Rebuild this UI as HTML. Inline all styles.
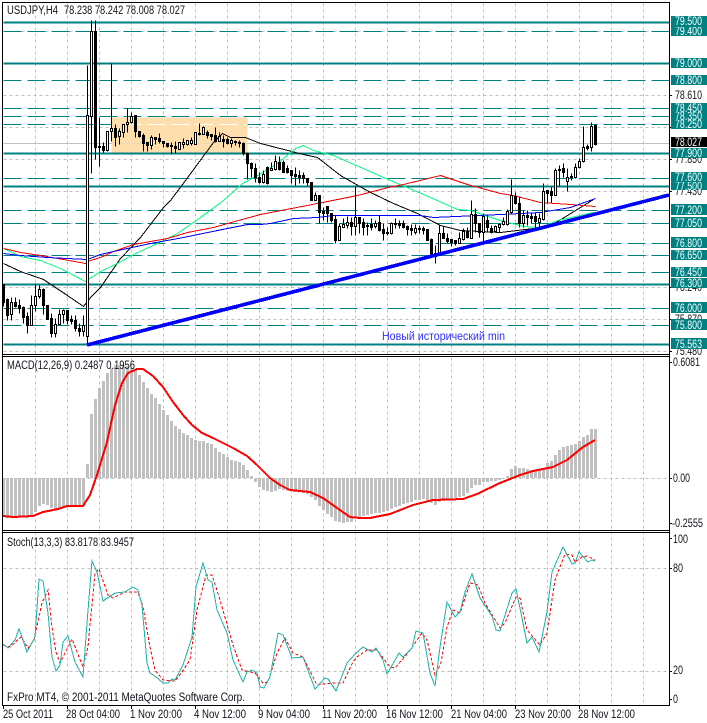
<!DOCTYPE html>
<html>
<head>
<meta charset="utf-8">
<title>USDJPY,H4</title>
<style>
html,body{margin:0;padding:0;background:#fff;width:707px;height:723px;overflow:hidden}
svg{display:block}
text{font-family:"Liberation Sans",sans-serif;font-size:11.5px;fill:#10141c}
.l text{fill:#f4ffff}
.l rect{fill:#008080}
</style>
</head>
<body>
<svg width="707" height="723" viewBox="0 0 707 723" xmlns="http://www.w3.org/2000/svg">
<rect width="707" height="723" fill="#fff"/>
<g transform="translate(.5,.5)" shape-rendering="crispEdges">
<!-- vertical grid -->
<path fill="none" stroke="#c0c0c0" stroke-dasharray="3 3" d="M35 3V705M67 3V705M99 3V705M131 3V705M163 3V705M195 3V705M227 3V705M259 3V705M291 3V705M323 3V705M355 3V705M387 3V705M419 3V705M451 3V705M483 3V705M515 3V705M547 3V705M579 3V705M611 3V705M643 3V705"/>
<!-- horizontal grid main -->
<path fill="none" stroke="#c0c0c0" stroke-dasharray="3 3" d="M3 31H669M3 95H669M3 127H669M3 159H669M3 191H669M3 223H669M3 255H669M3 287H669M3 319H669M3 351H669M3 478H669M3 568H669M3 671H669"/>
<!-- current price -->
<path fill="none" stroke="#c0c0c0" d="M3 143H669"/>
<!-- dashed teal levels -->
<path fill="none" stroke="#008080" stroke-dasharray="18 6" d="M3 31H669M3 80H669M3 108H669M3 116H669M3 124H669M3 178H669M3 210H669M3 223H669M3 243H669M3 255H669M3 272H669M3 308H669M3 325H669"/>
<!-- orange box -->
<rect x="111" y="117" width="136" height="35" fill="#ffdead" stroke="none"/>
<path fill="none" stroke="#fff" stroke-dasharray="18 6" d="M123 124H247"/>
<path fill="none" stroke="#f0d8b0" d="M111 143H247"/>
<!-- solid teal levels -->
<path fill="none" stroke="#008080" stroke-width="2" d="M3 22H669M3 63H669M3 153H669M3 186H669M3 284H669M3 344H669"/>
</g>
<!-- moving averages -->
<g transform="translate(.5,.5)" fill="none" shape-rendering="crispEdges">
<polyline stroke="#000" stroke-width="1" points="3,263 20,271 43,279 67,295 83,306 90,297 100,287 120,258 140,237 163,207 170,200 185,180 213,142 222,133 230,137 245,137 260,143 303,154 317,157 340,175 370,192 393,203 417,213 440,225 460,230 500,232 533,228 554,223 593,199"/>
<polyline stroke="#00ff7f" stroke-width="1" points="3,248 20,256 40,260 60,268 85,281 100,271 117,263 133,254 157,243 177,233 200,217 223,200 242,183 257,175 277,163 295,148 303,145 313,150 333,155 390,180 430,197 457,209 470,210 500,220 523,226 540,227 557,220 593,212"/>
<polyline stroke="#ff0000" stroke-width="1" points="3,248 20,252 40,255 63,259 85,263 87,261 100,257 113,251 133,244 167,238 187,232 213,227 227,223 260,214 317,203 357,195 388,187 403,184 440,175 467,184 500,193 513,195 540,202 570,204 595,206"/>
<polyline stroke="#0000ff" stroke-width="1" points="3,253 20,255 47,257 87,259 100,254 113,251 150,243 183,237 217,230 247,224 260,224 270,223 293,218 317,217 333,215 420,215 433,217 500,214 540,212 570,207 595,198"/>
</g>
<!-- candles -->
<g transform="translate(.5,.5)" shape-rendering="crispEdges" stroke="#000">
<path fill="none" d="M3 284V306M7 298V320M11 297V320M15 297V307M19 299V313M23 306V323M27 312V333M31 295V325M35 283V311M39 285V298M43 288V314M47 305V319M51 313V337M55 318V337M59 309V324M63 309V323M67 310V324M71 315V324M75 315V331M79 323V336M83 315V336M87 65V345M91 20V173M95 20V159M99 117V166M103 142V152M107 131V151M111 63V141M115 124V146M119 128V144M123 124V137M127 108V132M131 112V123M135 115V137M139 131V137M143 133V151M147 142V151M151 135V149M155 137V144M159 133V143M163 141V147M167 143V147M171 142V154M175 141V153M179 142V149M183 138V148M187 140V145M191 137V145M195 132V144M199 123V135M203 126V134M207 130V138M211 134V140M215 127V142M219 132V141M223 135V147M227 137V144M231 138V147M235 140V145M239 140V147M243 142V155M247 152V179M251 162V177M255 163V182M259 172V183M263 170V183M267 166V184M271 162V170M275 155V170M279 156V170M283 160V172M287 165V173M291 170V183M295 167V185M299 170V183M303 172V183M307 178V185M311 182V200M315 192V200M319 195V223M323 207V220M327 206V222M331 213V222M335 215V243M339 223V240M343 218V227M347 216V228M351 217V235M355 186V235M359 217V233M363 218V235M367 222V235M371 218V230M375 220V228M379 215V231M383 223V240M387 227V235M391 222V234M395 218V228M399 220V228M403 220V228M407 225V235M411 224V235M415 224V234M419 225V233M423 226V234M427 229V240M431 238V257M435 245V263M439 225V255M443 226V238M447 233V243M451 239V246M455 240V245M459 232V243M463 228V240M467 227V238M471 200V238M475 208V232M479 223V237M483 213V241M487 215V232M491 225V233M495 225V232M499 223V232M503 217V225M507 209V225M511 179V213M515 192V204M519 197V227M523 210V227M527 210V225M531 212V223M535 212V227M539 213V227M543 183V220M547 190V203M551 187V202M555 168V195M559 165V186M563 163V177M567 168V191M571 173V180M575 163V178M579 158V168M583 126V162M587 144V150M591 122V151M595 124V145"/>
<path fill="#000" d="M3 284h1v18h-1zM6 299h2v16h-2zM14 302h2v4h-2zM18 305h2v3h-2zM22 307h2v10h-2zM26 316h2v9h-2zM42 289h2v16h-2zM46 305h2v14h-2zM50 318h2v15h-2zM66 310h2v10h-2zM70 319h2v2h-2zM74 320h2v8h-2zM78 328h2v3h-2zM94 31h2v116h-2zM98 146h2v1h-2zM102 146h2v4h-2zM114 128h2v9h-2zM134 115h2v16h-2zM138 131h2v5h-2zM142 135h2v8h-2zM146 142h2v3h-2zM154 137h2v2h-2zM158 138h2v3h-2zM162 141h2v2h-2zM166 143h2v3h-2zM170 145h2v1h-2zM174 146h2v2h-2zM198 133h2v1h-2zM206 132h2v3h-2zM210 134h2v2h-2zM214 135h2v6h-2zM222 139h2v2h-2zM226 139h2v4h-2zM234 141h2v1h-2zM238 142h2v1h-2zM242 143h2v10h-2zM246 153h2v10h-2zM250 163h2v5h-2zM254 168h2v9h-2zM258 177h2v5h-2zM266 167h2v16h-2zM278 162h2v7h-2zM282 162h2v10h-2zM286 168h2v4h-2zM290 170h2v5h-2zM294 174h2v2h-2zM298 175h2v2h-2zM302 175h2v3h-2zM306 178h2v4h-2zM310 182h2v18h-2zM318 195h2v17h-2zM322 211h2v2h-2zM326 206h2v7h-2zM330 213h2v7h-2zM334 219h2v21h-2zM350 222h2v4h-2zM358 217h2v6h-2zM362 222h2v5h-2zM366 225h2v1h-2zM370 224h2v3h-2zM378 222h2v8h-2zM382 229h2v4h-2zM386 232h2v1h-2zM394 223h2v1h-2zM398 223h2v2h-2zM402 223h2v4h-2zM406 226h2v3h-2zM410 228h2v2h-2zM418 228h2v1h-2zM422 228h2v2h-2zM426 229h2v11h-2zM430 239h2v17h-2zM434 253h2v3h-2zM442 233h2v5h-2zM446 238h2v3h-2zM450 239h2v3h-2zM454 240h2v3h-2zM466 231h2v6h-2zM474 214h2v9h-2zM478 223h2v9h-2zM486 220h2v7h-2zM490 228h2v4h-2zM514 196h2v7h-2zM518 203h2v20h-2zM526 215h2v2h-2zM530 216h2v2h-2zM534 216h2v5h-2zM546 190h2v3h-2zM550 191h2v4h-2zM558 169h2v1h-2zM562 168h2v4h-2zM570 176h2v1h-2zM586 146h2v2h-2zM594 125h2v19h-2z"/>
<path fill="#fff" d="M10 302h2v12h-2zM30 305h2v20h-2zM34 296h2v9h-2zM38 289h2v7h-2zM54 324h2v9h-2zM58 314h2v10h-2zM62 310h2v4h-2zM82 325h2v6h-2zM86 115h2v221h-2zM90 31h2v85h-2zM106 131h2v19h-2zM110 128h2v3h-2zM118 131h2v5h-2zM122 124h2v8h-2zM126 122h2v2h-2zM130 116h2v6h-2zM150 137h2v8h-2zM178 142h2v7h-2zM182 142h2v2h-2zM186 140h2v4h-2zM190 140h2v3h-2zM194 132h2v12h-2zM202 127h2v7h-2zM218 136h2v5h-2zM230 140h2v3h-2zM262 174h2v8h-2zM270 168h2v2h-2zM274 161h2v8h-2zM314 195h2v5h-2zM338 226h2v14h-2zM342 224h2v3h-2zM346 222h2v3h-2zM354 217h2v9h-2zM374 223h2v3h-2zM390 223h2v10h-2zM414 228h2v4h-2zM438 233h2v22h-2zM458 238h2v5h-2zM462 231h2v8h-2zM470 214h2v24h-2zM482 216h2v16h-2zM494 226h2v5h-2zM498 224h2v3h-2zM502 221h2v3h-2zM506 211h2v13h-2zM510 195h2v17h-2zM522 215h2v8h-2zM538 218h2v4h-2zM542 191h2v28h-2zM554 170h2v25h-2zM566 177h2v4h-2zM574 167h2v10h-2zM578 161h2v6h-2zM582 147h2v14h-2zM590 126h2v21h-2z"/>
</g>
<!-- trend line -->
<line x1="87" y1="345" x2="669" y2="195" stroke="#0000ff" stroke-width="3.6" shape-rendering="crispEdges"/>
<text x="382" y="340" textLength="123" lengthAdjust="spacingAndGlyphs" style="fill:#3030ff;font-size:12px">Новый исторический min</text>
<!-- MACD histogram -->
<path fill="none" stroke="#c0c0c0" stroke-width="3" shape-rendering="crispEdges" transform="translate(.5,0)" d="M3 478V517M7 478V518M11 478V517M15 478V517M19 478V517M23 478V517M27 478V518M31 478V517M35 478V512M39 478V506M43 478V504M47 478V505M51 478V508M55 478V509M59 478V509M63 478V507M67 478V506M71 478V506M75 478V506M79 478V506M83 478V506M87 478V464M91 478V414M95 478V399M99 478V388M103 478V381M107 478V373M111 478V368M115 478V365M119 478V365M123 478V365M127 478V366M131 478V368M135 478V370M139 478V375M143 478V382M147 478V388M151 478V394M155 478V398M159 478V404M163 478V410M167 478V415M171 478V421M175 478V426M179 478V429M183 478V433M187 478V435M191 478V438M195 478V440M199 478V441M203 478V441M207 478V443M211 478V444M215 478V448M219 478V452M223 478V454M227 478V457M231 478V460M235 478V461M239 478V462M243 478V465M247 478V470M251 478V476M255 478V482M259 478V487M263 478V490M267 478V491M271 478V492M275 478V491M279 478V489M283 478V490M287 478V491M291 478V491M295 478V492M299 478V492M303 478V493M307 478V494M311 478V497M315 478V500M319 478V506M323 478V510M327 478V514M331 478V517M335 478V521M339 478V522M343 478V523M347 478V522M351 478V522M355 478V518M359 478V517M363 478V516M367 478V515M371 478V514M375 478V513M379 478V513M383 478V512M387 478V511M391 478V509M395 478V507M399 478V506M403 478V504M407 478V503M411 478V502M415 478V500M419 478V500M423 478V499M427 478V501M431 478V503M435 478V505M439 478V502M443 478V501M447 478V500M451 478V499M455 478V498M459 478V497M463 478V496M467 478V493M471 478V488M475 478V485M479 478V485M483 478V482M487 478V482M491 478V481M495 478V481M499 478V480M503 478V479M507 478V476M511 478V469M515 478V466M519 478V468M523 478V468M527 478V469M531 478V470M535 478V471M539 478V470M543 478V468M547 478V463M551 478V461M555 478V455M559 478V450M563 478V447M567 478V446M571 478V445M575 478V444M579 478V441M583 478V437M587 478V435M591 478V429M595 478V429"/>
<polyline fill="none" stroke="#ff0000" stroke-width="2" shape-rendering="crispEdges" points="3,516 13,517 33,516 43,512 58,509 67,506 83,506 90,495 97,475 107,442 115,405 122,383 128,373 137,369 143,369 153,376 163,387 173,402 183,415 192,425 202,433 213,438 233,448 247,456 257,465 270,478 280,485 290,490 300,491 310,492 323,498 337,508 350,517 360,518 370,518 390,514 413,505 433,500 463,499 477,494 500,483 520,475 533,471 553,467 567,460 583,447 595,440"/>
<!-- Stochastic -->
<polyline fill="none" stroke="#ff0000" stroke-width="1" stroke-dasharray="3 2" shape-rendering="crispEdges" points="3,645 10,647 21,637 28,648 34,640 42,603 48,590 52,627 56,652 60,663 72,639 83,667 88,647 95,573 99,569 108,595 113,598 125,592 138,592 143,607 150,647 155,670 163,680 175,681 182,672 190,660 197,610 206,575 212,575 220,600 233,645 242,670 255,673 263,683 268,682 277,653 285,638 293,653 303,657 317,685 332,683 343,683 353,662 357,657 367,650 377,650 390,667 395,668 408,653 422,633 427,640 435,675 441,663 447,627 453,610 460,613 470,583 478,585 485,603 500,628 505,623 516,597 520,598 527,630 540,645 547,633 555,580 565,554 572,555 575,562 582,557 587,556 595,560"/>
<polyline fill="none" stroke="#20b2aa" stroke-width="1" shape-rendering="crispEdges" points="3,644 8,648 15,640 19,629 23,640 27,652 35,637 39,579 43,581 48,613 52,657 56,671 60,665 63,642 68,636 75,662 83,677 87,623 92,561 97,572 103,601 115,593 125,592 133,587 138,590 142,605 147,663 150,673 155,676 163,683 168,683 172,679 175,680 183,665 192,637 196,587 203,563 208,580 212,582 217,610 227,633 233,660 243,682 247,672 252,670 257,673 260,687 264,688 270,677 278,633 283,635 292,658 303,657 315,689 325,678 328,679 336,691 347,663 355,654 363,647 372,652 376,648 383,660 387,674 399,653 403,657 412,648 416,631 423,633 430,673 435,686 440,647 447,602 455,617 460,612 465,592 472,574 480,598 492,616 496,630 500,631 512,593 516,589 522,618 527,643 532,637 539,652 547,612 552,572 563,547 572,564 575,563 579,552 588,562 592,560 595,561"/>
<!-- frames -->
<g fill="#000" shape-rendering="crispEdges">
<rect x="2" y="2" width="668" height="1"/>
<rect x="2" y="2" width="1" height="704"/>
<rect x="669" y="2" width="1" height="704"/>
<rect x="2" y="354" width="668" height="1"/>
<rect x="2" y="356" width="668" height="1"/>
<rect x="2" y="530" width="668" height="1"/>
<rect x="2" y="532" width="668" height="1"/>
<rect x="2" y="705" width="668" height="1"/>
<rect x="669" y="95" width="3" height="1"/>
<rect x="669" y="127" width="3" height="1"/>
<rect x="669" y="159" width="3" height="1"/>
<rect x="669" y="191" width="3" height="1"/>
<rect x="669" y="287" width="3" height="1"/>
<rect x="669" y="319" width="3" height="1"/>
<rect x="669" y="351" width="3" height="1"/>
<rect x="669" y="362" width="3" height="1"/>
<rect x="669" y="478" width="3" height="1"/>
<rect x="669" y="523" width="3" height="1"/>
<rect x="669" y="568" width="3" height="1"/>
<rect x="669" y="671" width="3" height="1"/>
<rect x="669" y="699" width="3" height="1"/>
<rect x="669" y="538" width="3" height="1"/>
<rect x="3" y="706" width="1" height="3"/>
<rect x="67" y="706" width="1" height="3"/>
<rect x="131" y="706" width="1" height="3"/>
<rect x="195" y="706" width="1" height="3"/>
<rect x="259" y="706" width="1" height="3"/>
<rect x="323" y="706" width="1" height="3"/>
<rect x="387" y="706" width="1" height="3"/>
<rect x="451" y="706" width="1" height="3"/>
<rect x="515" y="706" width="1" height="3"/>
<rect x="579" y="706" width="1" height="3"/>
</g>
<!-- axis labels -->
<text x="7" y="14" textLength="51" lengthAdjust="spacingAndGlyphs">USDJPY,H4</text>
<text x="64" y="14" textLength="121" lengthAdjust="spacingAndGlyphs">78.238 78.242 78.008 78.027</text>
<text x="7" y="369" textLength="128" lengthAdjust="spacingAndGlyphs">MACD(12,26,9) 0.2487 0.1956</text>
<text x="7" y="546" textLength="127" lengthAdjust="spacingAndGlyphs">Stoch(13,3,3) 83.8178 83.9457</text>
<text x="7" y="701" textLength="238" lengthAdjust="spacingAndGlyphs">FxPro MT4, © 2001-2011 MetaQuotes Software Corp.</text>
<text x="3" y="718" textLength="50" lengthAdjust="spacingAndGlyphs">25 Oct 2011</text>
<text x="66" y="718" textLength="54" lengthAdjust="spacingAndGlyphs">28 Oct 04:00</text>
<text x="130" y="718" textLength="52" lengthAdjust="spacingAndGlyphs">1 Nov 20:00</text>
<text x="194" y="718" textLength="52" lengthAdjust="spacingAndGlyphs">4 Nov 12:00</text>
<text x="258" y="718" textLength="52" lengthAdjust="spacingAndGlyphs">9 Nov 04:00</text>
<text x="322" y="718" textLength="55" lengthAdjust="spacingAndGlyphs">11 Nov 20:00</text>
<text x="386" y="718" textLength="57" lengthAdjust="spacingAndGlyphs">16 Nov 12:00</text>
<text x="451" y="718" textLength="56" lengthAdjust="spacingAndGlyphs">21 Nov 04:00</text>
<text x="515" y="718" textLength="56" lengthAdjust="spacingAndGlyphs">23 Nov 20:00</text>
<text x="578" y="718" textLength="57" lengthAdjust="spacingAndGlyphs">28 Nov 12:00</text>
<text x="675" y="99" textLength="27" lengthAdjust="spacingAndGlyphs">78.610</text>
<text x="675" y="163" textLength="27" lengthAdjust="spacingAndGlyphs">77.850</text>
<text x="675" y="195" textLength="27" lengthAdjust="spacingAndGlyphs">77.430</text>
<text x="675" y="291" textLength="27" lengthAdjust="spacingAndGlyphs">76.240</text>
<text x="675" y="323" textLength="27" lengthAdjust="spacingAndGlyphs">75.870</text>
<text x="675" y="355" textLength="27" lengthAdjust="spacingAndGlyphs">75.480</text>
<text x="673" y="366" textLength="27" lengthAdjust="spacingAndGlyphs">0.6081</text>
<text x="673" y="482" textLength="17" lengthAdjust="spacingAndGlyphs">0.00</text>
<text x="672" y="527" textLength="31" lengthAdjust="spacingAndGlyphs">-0.2555</text>
<text x="673" y="543" textLength="15" lengthAdjust="spacingAndGlyphs">100</text>
<text x="673" y="572" textLength="10" lengthAdjust="spacingAndGlyphs">80</text>
<text x="673" y="674" textLength="10" lengthAdjust="spacingAndGlyphs">20</text>
<text x="673" y="703" textLength="5" lengthAdjust="spacingAndGlyphs">0</text>
<!-- teal price labels: lower-priority first so later boxes overlap -->
<g class="l">
<rect x="671" y="26" width="36" height="10"/><text x="675" y="35" textLength="27" lengthAdjust="spacingAndGlyphs">79.400</text>
<rect x="671" y="16" width="36" height="11"/><text x="675" y="25" textLength="27" lengthAdjust="spacingAndGlyphs">79.500</text>
<rect x="671" y="58" width="36" height="10"/><text x="675" y="67" textLength="27" lengthAdjust="spacingAndGlyphs">79.000</text>
<rect x="671" y="75" width="36" height="10"/><text x="675" y="84" textLength="27" lengthAdjust="spacingAndGlyphs">78.800</text>
<rect x="671" y="119" width="36" height="10"/><text x="675" y="128" textLength="27" lengthAdjust="spacingAndGlyphs">78.250</text>
<rect x="671" y="111" width="36" height="9"/><text x="675" y="120" textLength="27" lengthAdjust="spacingAndGlyphs">78.350</text>
<rect x="671" y="103" width="36" height="9"/><text x="675" y="112" textLength="27" lengthAdjust="spacingAndGlyphs">78.450</text>
<rect x="671" y="137" width="36" height="10" style="fill:#000"/><text x="675" y="146" textLength="27" lengthAdjust="spacingAndGlyphs" style="fill:#fff">78.027</text>
<rect x="671" y="148" width="36" height="10"/><text x="675" y="157" textLength="27" lengthAdjust="spacingAndGlyphs">77.900</text>
<rect x="671" y="182" width="36" height="8"/><text x="675" y="190" textLength="27" lengthAdjust="spacingAndGlyphs">77.500</text>
<rect x="671" y="172" width="36" height="10"/><text x="675" y="181" textLength="27" lengthAdjust="spacingAndGlyphs">77.600</text>
<rect x="671" y="204" width="36" height="11"/><text x="675" y="214" textLength="27" lengthAdjust="spacingAndGlyphs">77.200</text>
<rect x="671" y="217" width="36" height="11"/><text x="675" y="227" textLength="27" lengthAdjust="spacingAndGlyphs">77.050</text>
<rect x="671" y="237" width="36" height="11"/><text x="675" y="247" textLength="27" lengthAdjust="spacingAndGlyphs">76.800</text>
<rect x="671" y="250" width="36" height="10"/><text x="675" y="259" textLength="27" lengthAdjust="spacingAndGlyphs">76.650</text>
<rect x="671" y="267" width="36" height="10"/><text x="675" y="276" textLength="27" lengthAdjust="spacingAndGlyphs">76.450</text>
<rect x="671" y="278" width="36" height="10"/><text x="675" y="287" textLength="27" lengthAdjust="spacingAndGlyphs">76.300</text>
<rect x="671" y="302" width="36" height="11"/><text x="675" y="312" textLength="27" lengthAdjust="spacingAndGlyphs">76.000</text>
<rect x="671" y="319" width="36" height="11"/><text x="675" y="329" textLength="27" lengthAdjust="spacingAndGlyphs">75.800</text>
<rect x="671" y="338" width="36" height="11"/><text x="675" y="348" textLength="27" lengthAdjust="spacingAndGlyphs">75.563</text>
</g>
</svg>
</body>
</html>
